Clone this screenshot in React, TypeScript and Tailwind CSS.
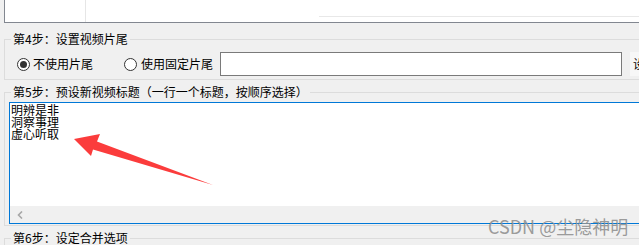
import React from "react";

const Radio: React.FC<{ checked?: boolean }> = ({ checked }) => (
  <span className="flex h-[13px] w-[13px] shrink-0 items-center justify-center rounded-full border border-[#333333] bg-white">
    {checked && <span className="h-[7px] w-[7px] rounded-full bg-[#333333]" />}
  </span>
);

const App: React.FC = () => {
  return (
    <div className="relative h-[245px] w-[639px] overflow-hidden bg-[#f0f0f0] text-[12px] text-black font-['Noto_Sans_CJK_SC',sans-serif]">
      {/* list box at the top */}
      <div className="ml-[4px] flex h-[23px] w-[700px] border-b border-l border-[#828790] bg-white">
        <div className="w-[81px] border-r border-[#e6e6e6]" />
        <div className="flex-1">
          <div className="ml-[233px] h-[17px] border-b border-[#e8e8e8]" />
        </div>
      </div>

      {/* step 4 */}
      <fieldset className="ml-[4px] mt-[9px] w-[700px] border border-[#dcdcdc] pb-[3px]">
        <legend className="ml-[6px] px-[2px] leading-[14px]">第4步：设置视频片尾</legend>
        <div className="mt-[6px] flex h-[24px] items-center pl-[12px]">
          <Radio checked />
          <span className="ml-[3px] leading-[14px]">不使用片尾</span>
          <span className="ml-[31px]">
            <Radio />
          </span>
          <span className="ml-[4px] leading-[14px]">使用固定片尾</span>
          <div className="ml-[7px] h-[24px] w-[402px] shrink-0 border border-[#7a7a7a] bg-white" />
          <div className="ml-[8px] flex h-[24px] w-[60px] shrink-0 items-center bg-[#f7f7f7] pl-[3px]">设</div>
        </div>
      </fieldset>

      {/* step 5 */}
      <fieldset className="ml-[4px] mt-[5px] w-[700px] border border-[#dcdcdc] pb-[1px]">
        <legend className="ml-[6px] px-[2px] leading-[14px]">
          第5步：预设新视频标题（一行一个标题，按顺序选择）
        </legend>
        <div className="ml-[4px] mt-[3px] flex h-[122px] w-[700px] flex-col border border-[#0078d7] bg-white">
          <div className="flex-1 pl-[1px] pt-[1px] leading-[12px]">
            <div>明辨是非</div>
            <div>洞察事理</div>
            <div>虚心听取</div>
          </div>
          <div className="flex h-[17px] items-center bg-[#f0f0f0] pl-[7px]">
            <svg width="6" height="8" viewBox="0 0 6 8">
              <path d="M5 0.5 L1.5 4 L5 7.5" fill="none" stroke="#a6a6a6" strokeWidth="1.6" />
            </svg>
          </div>
        </div>
      </fieldset>

      {/* step 6 */}
      <fieldset className="ml-[4px] mt-[5px] w-[700px] border border-[#dcdcdc] pb-[10px]">
        <legend className="ml-[6px] px-[2px] leading-[14px]">第6步：设定合并选项</legend>
      </fieldset>

      {/* red annotation arrow */}
      <svg className="pointer-events-none absolute left-0 top-0" width="639" height="245">
        <polygon points="74,139 100,134 97,141.5 213,185 93,149.5 91,156" fill="#fb3c3c" />
      </svg>

      {/* watermark */}
      <div className="pointer-events-none absolute left-[488px] top-[215px] text-[18px] leading-[22px] text-[#8f8f8f]/90">
        CSDN @尘隐神明
      </div>
    </div>
  );
};

export default App;
